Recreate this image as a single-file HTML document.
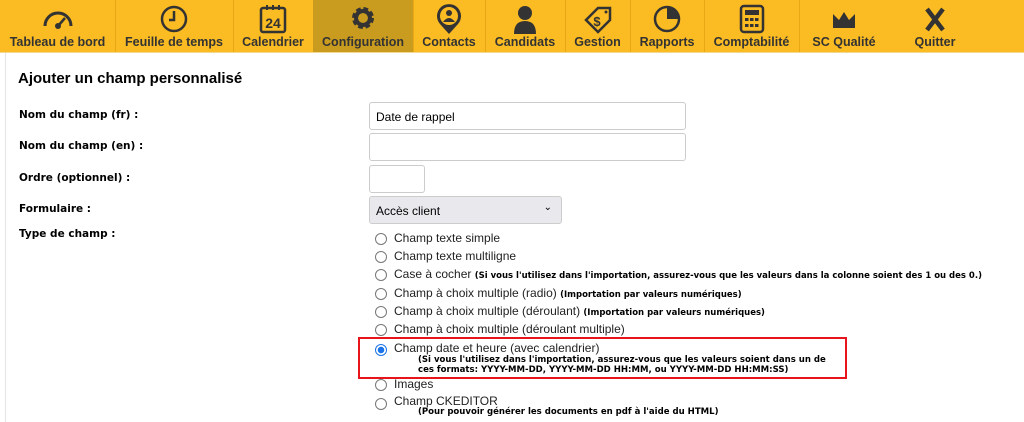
<!DOCTYPE html>
<html><head><meta charset="utf-8"><style>
body{margin:0;width:1024px;height:422px;overflow:hidden;background:#fff;font-family:"Liberation Sans",sans-serif;position:relative;color:#000}
.nav{position:absolute;left:0;top:0;width:1024px;height:52px;background:#fbbb22;border-bottom:1px solid #f0d890}
.it{position:absolute;top:0;height:52px;border-right:1px solid #e8a816;text-align:center;font-weight:bold;font-size:12.5px;color:#333}
.it span{position:absolute;left:0;right:0;top:35px}
.it svg{position:absolute;left:50%;top:4px;transform:translateX(-50%)}
.a{position:absolute;white-space:nowrap}
.lbl{font-weight:bold;font-size:10.5px;left:19px;font-family:"DejaVu Sans",sans-serif}
.inp{position:absolute;border:1px solid #ccc;border-radius:3px;background:#fff;box-sizing:border-box;font-size:12px;padding:7px 6px}
.r{position:absolute;left:375px;width:10px;height:10px;border:1px solid #777;border-radius:50%}
.t{position:absolute;left:394px;font-size:12px;color:#222;white-space:nowrap}
.t b{font-size:8.5px;color:#000;font-family:"DejaVu Sans",sans-serif}
.n{position:absolute;left:418px;font-size:8.55px;font-weight:bold;white-space:nowrap;font-family:"DejaVu Sans",sans-serif}
</style></head><body>
<div class="nav">
<div class="it" style="left:0;width:115px"><svg width="34" height="28" viewBox="0 0 34 28"><path d="M4 22 A13 13 0 0 1 30 22" fill="none" stroke="#333" stroke-width="3"/><path d="M17 22 L24 14" stroke="#333" stroke-width="2.5"/><circle cx="17" cy="22" r="3" fill="#333"/></svg><span>Tableau de bord</span></div>
<div class="it" style="left:115px;width:118px"><svg width="30" height="30" viewBox="0 0 30 30"><circle cx="15" cy="15" r="12" fill="none" stroke="#333" stroke-width="2.5"/><path d="M15 7 V16 H10" fill="none" stroke="#333" stroke-width="2.5"/></svg><span>Feuille de temps</span></div>
<div class="it" style="left:233px;width:80px"><svg width="30" height="30" viewBox="0 0 30 30"><rect x="3" y="4" width="24" height="24" rx="2" fill="none" stroke="#333" stroke-width="2.5"/><path d="M9 1v5M15 1v5M21 1v5" stroke="#333" stroke-width="2"/><text x="15" y="24" text-anchor="middle" font-family="Liberation Sans" font-weight="bold" font-size="14" fill="#333">24</text></svg><span>Calendrier</span></div>
<div class="it" style="left:313px;width:100px;background:#c99b1e"><svg width="28" height="28" viewBox="0 0 28 28"><circle cx="14" cy="14" r="8" fill="none" stroke="#333" stroke-width="6" stroke-dasharray="4 2.3"/><circle cx="14" cy="14" r="7" fill="none" stroke="#333" stroke-width="4"/></svg><span>Configuration</span></div>
<div class="it" style="left:413px;width:72px"><svg width="28" height="32" viewBox="0 0 28 32"><path d="M14 30 L5 20 A12 12 0 1 1 23 20 Z" fill="#333"/><circle cx="14" cy="12" r="9" fill="#fbbb22"/><circle cx="14" cy="9" r="3" fill="#333"/><path d="M8 18 Q14 10 20 18Z" fill="#333"/></svg><span>Contacts</span></div>
<div class="it" style="left:485px;width:80px"><svg width="28" height="32" viewBox="0 0 28 32"><circle cx="14" cy="9" r="7" fill="#333"/><path d="M3 30 Q3 17 14 17 Q25 17 25 30Z" fill="#333"/></svg><span>Candidats</span></div>
<div class="it" style="left:565px;width:65px"><svg width="32" height="32" viewBox="0 0 32 32"><path d="M4 16 L16 4 H28 V16 L16 28 Z" fill="none" stroke="#333" stroke-width="2.5"/><circle cx="24" cy="8" r="1.5" fill="#333"/><text x="15" y="22" text-anchor="middle" font-family="Liberation Sans" font-weight="bold" font-size="13" fill="#333">$</text></svg><span>Gestion</span></div>
<div class="it" style="left:630px;width:74px"><svg width="30" height="30" viewBox="0 0 30 30"><circle cx="15" cy="15" r="12" fill="none" stroke="#333" stroke-width="2.5"/><path d="M15 3 A12 12 0 0 1 27 15 H15Z" fill="#333"/></svg><span>Rapports</span></div>
<div class="it" style="left:704px;width:95px"><svg width="26" height="30" viewBox="0 0 26 30"><rect x="2" y="2" width="22" height="26" rx="3" fill="none" stroke="#333" stroke-width="2.5"/><rect x="6" y="6" width="14" height="5" fill="#333"/><g fill="#333"><rect x="6" y="14" width="3.5" height="3"/><rect x="11" y="14" width="3.5" height="3"/><rect x="16" y="14" width="3.5" height="3"/><rect x="6" y="20" width="3.5" height="3"/><rect x="11" y="20" width="3.5" height="3"/><rect x="16" y="20" width="3.5" height="3"/></g></svg><span>Comptabilité</span></div>
<div class="it" style="left:799px;width:90px;border:none"><svg width="26" height="30" viewBox="0 0 26 30"><path d="M2 10 L8 16 L13 8 L18 16 L24 10 V24 H2Z" fill="#333"/></svg><span>SC Qualité</span></div>
<div class="it" style="left:889px;width:92px;border:none"><svg width="24" height="30" viewBox="0 0 24 30"><path d="M4 5 L20 26 M20 5 L4 26" stroke="#333" stroke-width="4.5"/></svg><span>Quitter</span></div>
</div>
<div class="a" style="left:5px;top:53px;width:1px;height:369px;background:#e4e4e4"></div>
<div class="a" style="left:18px;top:70px;font-weight:bold;font-size:15px">Ajouter un champ personnalisé</div>
<div class="a lbl" style="top:109px">Nom du champ (fr) :</div>
<div class="a lbl" style="top:140px">Nom du champ (en) :</div>
<div class="a lbl" style="top:172px">Ordre (optionnel) :</div>
<div class="a lbl" style="top:203px">Formulaire :</div>
<div class="a lbl" style="top:228px">Type de champ :</div>
<div class="inp" style="left:369px;top:102px;width:317px;height:28px">Date de rappel</div>
<div class="inp" style="left:369px;top:133px;width:317px;height:28px"></div>
<div class="inp" style="left:369px;top:165px;width:56px;height:28px"></div>
<div class="inp" style="left:369px;top:196px;width:193px;height:28px;background:#e9e9ed">Accès client<span style="position:absolute;right:9px;top:5px;font-size:10px">&#8964;</span></div>
<div class="r" style="top:233px"></div><div class="t" style="top:231px">Champ texte simple</div>
<div class="r" style="top:251px"></div><div class="t" style="top:249px">Champ texte multiligne</div>
<div class="r" style="top:269px"></div><div class="t" style="top:267px">Case à cocher <b>(Si vous l'utilisez dans l'importation, assurez-vous que les valeurs dans la colonne soient des 1 ou des 0.)</b></div>
<div class="r" style="top:288px"></div><div class="t" style="top:286px">Champ à choix multiple (radio) <b>(Importation par valeurs numériques)</b></div>
<div class="r" style="top:306px"></div><div class="t" style="top:304px">Champ à choix multiple (déroulant) <b>(Importation par valeurs numériques)</b></div>
<div class="r" style="top:324px"></div><div class="t" style="top:322px">Champ à choix multiple (déroulant multiple)</div>
<div class="a" style="left:358px;top:337px;width:485px;height:38px;border:2px solid #e8141b"></div>
<div class="r" style="top:344px;border-color:#1a73e8;background:radial-gradient(circle,#1a73e8 0 3px,#fff 3.5px)"></div><div class="t" style="top:341px">Champ date et heure (avec calendrier)</div>
<div class="n" style="top:355px">(Si vous l'utilisez dans l'importation, assurez-vous que les valeurs soient dans un de</div>
<div class="n" style="top:365px">ces formats: YYYY-MM-DD, YYYY-MM-DD HH:MM, ou YYYY-MM-DD HH:MM:SS)</div>
<div class="r" style="top:379px"></div><div class="t" style="top:377px">Images</div>
<div class="r" style="top:398px"></div><div class="t" style="top:394px">Champ CKEDITOR</div>
<div class="n" style="top:407px">(Pour pouvoir générer les documents en pdf à l'aide du HTML)</div>
</body></html>
